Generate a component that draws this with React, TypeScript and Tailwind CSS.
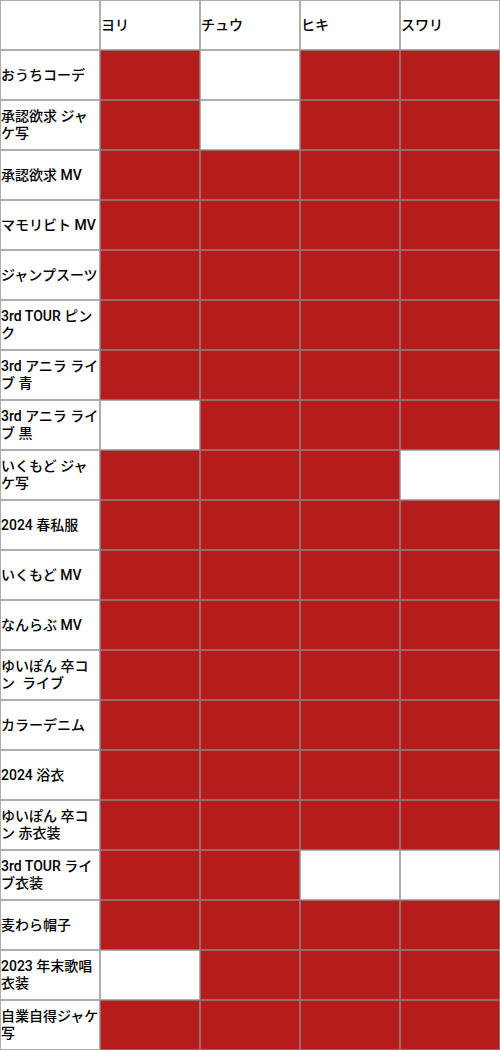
const members = ['ヨリ', 'チュウ', 'ヒキ', 'スワリ']

// 1 = 塗り, 0 = 空き
const rows: { name: string; marks: number[] }[] = [
  { name: 'おうちコーデ', marks: [1, 0, 1, 1] },
  { name: '承認欲求 ジャケ写', marks: [1, 0, 1, 1] },
  { name: '承認欲求 MV', marks: [1, 1, 1, 1] },
  { name: 'マモリビト MV', marks: [1, 1, 1, 1] },
  { name: 'ジャンプスーツ', marks: [1, 1, 1, 1] },
  { name: '3rd TOUR ピンク', marks: [1, 1, 1, 1] },
  { name: '3rd アニラ ライブ 青', marks: [1, 1, 1, 1] },
  { name: '3rd アニラ ライブ 黒', marks: [0, 1, 1, 1] },
  { name: 'いくもど ジャケ写', marks: [1, 1, 1, 0] },
  { name: '2024 春私服', marks: [1, 1, 1, 1] },
  { name: 'いくもど MV', marks: [1, 1, 1, 1] },
  { name: 'なんらぶ MV', marks: [1, 1, 1, 1] },
  { name: 'ゆいぽん 卒コン  ライブ', marks: [1, 1, 1, 1] },
  { name: 'カラーデニム', marks: [1, 1, 1, 1] },
  { name: '2024 浴衣', marks: [1, 1, 1, 1] },
  { name: 'ゆいぽん 卒コン 赤衣装', marks: [1, 1, 1, 1] },
  { name: '3rd TOUR ライブ衣装', marks: [1, 1, 0, 0] },
  { name: '麦わら帽子', marks: [1, 1, 1, 1] },
  { name: '2023 年末歌唱衣装', marks: [0, 1, 1, 1] },
  { name: '自業自得ジャケ写', marks: [1, 1, 1, 1] },
]

const cell =
  'h-[50px] border border-[rgba(140,140,140,0.7)] flex items-center text-[14px] leading-[17px] font-medium text-black'

export default function App() {
  return (
    <div
      className="w-[500px] bg-white"
      style={{ fontFamily: 'Roboto, "Noto Sans CJK JP", sans-serif' }}
    >
      <div className="grid grid-cols-[repeat(5,100px)]">
        <div className={cell} />
        {members.map((m) => (
          <div key={m} className={cell}>
            {m}
          </div>
        ))}
        {rows.map((r) => (
          <div key={r.name} className="contents">
            <div className={`${cell} whitespace-pre-wrap`}>{r.name}</div>
            {r.marks.map((v, i) => (
              <div key={i} className={`${cell} ${v ? 'bg-[#b71c1c]' : 'bg-white'}`} />
            ))}
          </div>
        ))}
      </div>
    </div>
  )
}
